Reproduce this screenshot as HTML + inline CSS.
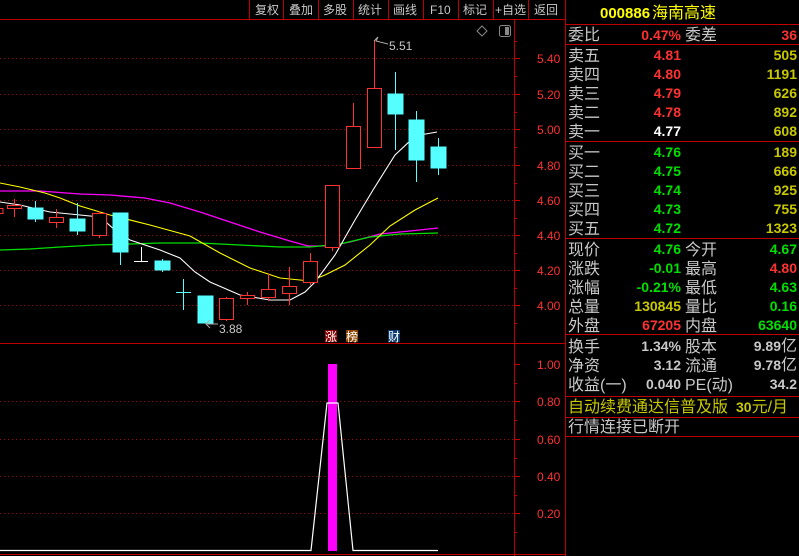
<!DOCTYPE html>
<html><head><meta charset="utf-8"><style>
html,body{margin:0;padding:0;background:#000;width:799px;height:556px;overflow:hidden}
svg{display:block}
text{font-family:"Liberation Sans","Noto Sans CJK SC",sans-serif}
.cn{font-size:16px;fill:#c8c8c8}
.n{font-size:14px;font-weight:bold}
.ax{font-size:12px;fill:#ff3232}
.bt{font-size:12px;fill:#c8c8c8}
</style></head><body>
<svg width="799" height="556" viewBox="0 0 799 556" xmlns="http://www.w3.org/2000/svg">
<rect width="799" height="556" fill="#000"/>
<!-- top bar -->
<line x1="0" y1="19.5" x2="565" y2="19.5" stroke="#c00000"/>
<g stroke="#c00000"><line x1="249.5" y1="0" x2="249.5" y2="19"/><line x1="283.5" y1="0" x2="283.5" y2="19"/><line x1="318.5" y1="0" x2="318.5" y2="19"/><line x1="353.5" y1="0" x2="353.5" y2="19"/><line x1="388.5" y1="0" x2="388.5" y2="19"/><line x1="423.5" y1="0" x2="423.5" y2="19"/><line x1="458.5" y1="0" x2="458.5" y2="19"/><line x1="493.5" y1="0" x2="493.5" y2="19"/><line x1="528.5" y1="0" x2="528.5" y2="19"/></g>
<g class="bt"><text x="255" y="14">复权</text><text x="289" y="14">叠加</text><text x="323" y="14">多股</text><text x="358" y="14">统计</text><text x="393" y="14">画线</text><text x="430" y="14">F10</text><text x="463" y="14">标记</text><text x="495" y="14">+自选</text><text x="534" y="14">返回</text></g>
<!-- icons -->
<path d="M482 26 L487 31 L482 36 L477 31 Z" fill="none" stroke="#888"/>
<rect x="499.5" y="25.5" width="11" height="11" rx="2" fill="none" stroke="#888"/><rect x="505" y="27" width="4" height="8" fill="#888"/>
<!-- axis borders -->
<line x1="514.5" y1="19" x2="514.5" y2="556" stroke="#c00000"/>
<line x1="565.5" y1="0" x2="565.5" y2="556" stroke="#c00000"/>
<line x1="0" y1="343.5" x2="565" y2="343.5" stroke="#c00000"/>
<line x1="0" y1="554.5" x2="565" y2="554.5" stroke="#c00000"/>
<!-- price grid -->
<g stroke="#b00000" stroke-dasharray="1,3">
<line x1="0" y1="58.5" x2="514" y2="58.5"/><line x1="0" y1="94.5" x2="514" y2="94.5"/><line x1="0" y1="129.5" x2="514" y2="129.5"/><line x1="0" y1="165.5" x2="514" y2="165.5"/><line x1="0" y1="200.5" x2="514" y2="200.5"/><line x1="0" y1="235.5" x2="514" y2="235.5"/><line x1="0" y1="270.5" x2="514" y2="270.5"/><line x1="0" y1="305.5" x2="514" y2="305.5"/>
<line x1="0" y1="401.5" x2="514" y2="401.5"/><line x1="0" y1="439.5" x2="514" y2="439.5"/><line x1="0" y1="476.5" x2="514" y2="476.5"/><line x1="0" y1="513.5" x2="514" y2="513.5"/>
</g>
<g stroke="#c00000">
<line x1="514" y1="58.5" x2="520" y2="58.5"/><line x1="514" y1="94.5" x2="520" y2="94.5"/><line x1="514" y1="129.5" x2="520" y2="129.5"/><line x1="514" y1="165.5" x2="520" y2="165.5"/><line x1="514" y1="200.5" x2="520" y2="200.5"/><line x1="514" y1="235.5" x2="520" y2="235.5"/><line x1="514" y1="270.5" x2="520" y2="270.5"/><line x1="514" y1="305.5" x2="520" y2="305.5"/>
<line x1="514" y1="76.5" x2="517" y2="76.5"/><line x1="514" y1="112.5" x2="517" y2="112.5"/><line x1="514" y1="147.5" x2="517" y2="147.5"/><line x1="514" y1="183.5" x2="517" y2="183.5"/><line x1="514" y1="218.5" x2="517" y2="218.5"/><line x1="514" y1="253.5" x2="517" y2="253.5"/><line x1="514" y1="288.5" x2="517" y2="288.5"/><line x1="514" y1="323.5" x2="517" y2="323.5"/><line x1="514" y1="41.5" x2="517" y2="41.5"/>
<line x1="514" y1="364.5" x2="520" y2="364.5"/><line x1="514" y1="401.5" x2="520" y2="401.5"/><line x1="514" y1="439.5" x2="520" y2="439.5"/><line x1="514" y1="476.5" x2="520" y2="476.5"/><line x1="514" y1="513.5" x2="520" y2="513.5"/>
<line x1="514" y1="383.5" x2="517" y2="383.5"/><line x1="514" y1="420.5" x2="517" y2="420.5"/><line x1="514" y1="458.5" x2="517" y2="458.5"/><line x1="514" y1="495.5" x2="517" y2="495.5"/><line x1="514" y1="532.5" x2="517" y2="532.5"/>
</g>
<g class="ax"><text x="537" y="63">5.40</text><text x="537" y="99">5.20</text><text x="537" y="134">5.00</text><text x="537" y="170">4.80</text><text x="537" y="205">4.60</text><text x="537" y="240">4.40</text><text x="537" y="275">4.20</text><text x="537" y="310">4.00</text>
<text x="537" y="369">1.00</text><text x="537" y="406">0.80</text><text x="537" y="444">0.60</text><text x="537" y="481">0.40</text><text x="537" y="518">0.20</text></g>
<!-- MA lines -->
<polyline fill="none" stroke="#ff00ff" stroke-width="1.3" points="0,191 40,191 80,194 110,195 145,198 170,203 200,212 230,222 260,232 290,241 308,246 330,246 350,242 380,234 410,231 438,228"/>
<polyline fill="none" stroke="#00e000" stroke-width="1.3" points="0,250 30,249 60,247 95,245 130,244 160,243 200,243 240,245 280,247 310,247 340,244 370,237 400,234 438,233"/>
<polyline fill="none" stroke="#ffff00" stroke-width="1.1" points="0,183 20,187 45,193 60,198 80,206 110,215 150,225 190,236 220,253 250,268 280,278 310,281 325,275 345,265 370,245 390,226 415,210 438,198"/>
<polyline fill="none" stroke="#fff" stroke-width="1.1" points="0,202 20,205 50,212 100,217 115,230 130,240 160,250 180,258 195,272 210,282 240,295 270,300 290,300 305,292 315,282 335,255 355,220 373,190 395,155 410,141 420,135 437,132"/>
<!-- candles -->
<g stroke="#ff3232" fill="#000">
<rect x="-3" y="208.5" width="6" height="5"/>
<line x1="14.5" y1="199" x2="14.5" y2="217"/><rect x="7.5" y="205.5" width="14" height="3"/>
<line x1="56.5" y1="209" x2="56.5" y2="228"/><rect x="49.5" y="217.5" width="14" height="5"/>
<line x1="99.5" y1="211" x2="99.5" y2="238"/><rect x="92.5" y="213.5" width="14" height="22"/>
<line x1="226.5" y1="297" x2="226.5" y2="321"/><rect x="219.5" y="298.5" width="14" height="21"/>
<line x1="247.5" y1="292" x2="247.5" y2="305"/><rect x="240.5" y="295.5" width="14" height="3"/>
<line x1="268.5" y1="273" x2="268.5" y2="301"/><rect x="261.5" y="289.5" width="14" height="8"/>
<line x1="289.5" y1="267" x2="289.5" y2="305"/><rect x="282.5" y="286.5" width="14" height="7"/>
<line x1="310.5" y1="253" x2="310.5" y2="285"/><rect x="303.5" y="261.5" width="14" height="21"/>
<line x1="332.5" y1="247" x2="332.5" y2="251"/><rect x="325.5" y="185.5" width="14" height="62"/>
<line x1="353.5" y1="103" x2="353.5" y2="126"/><rect x="346.5" y="126.5" width="14" height="42"/>
<line x1="374.5" y1="40" x2="374.5" y2="88"/><rect x="367.5" y="88.5" width="14" height="59"/>
</g>
<g stroke="#55ffff" fill="#55ffff">
<line x1="35.5" y1="201" x2="35.5" y2="222"/><rect x="28" y="208" width="15" height="11"/>
<line x1="77.5" y1="203" x2="77.5" y2="235"/><rect x="70" y="219" width="15" height="12"/>
<line x1="120.5" y1="252" x2="120.5" y2="265"/><rect x="113" y="213" width="15" height="39"/>
<line x1="162.5" y1="259" x2="162.5" y2="272"/><rect x="155" y="261" width="15" height="9"/>
<line x1="183.5" y1="279" x2="183.5" y2="310"/><line x1="176" y1="292.5" x2="191" y2="292.5"/>
<rect x="198" y="296" width="15" height="27"/>
<line x1="395.5" y1="72" x2="395.5" y2="150"/><rect x="388" y="94" width="15" height="20"/>
<line x1="416.5" y1="111" x2="416.5" y2="182"/><rect x="409" y="120" width="15" height="40"/>
<line x1="438.5" y1="138" x2="438.5" y2="175"/><rect x="431" y="147" width="15" height="21"/>
</g>
<line x1="141.5" y1="247" x2="141.5" y2="262" stroke="#fff"/><line x1="134" y1="261.5" x2="148" y2="261.5" stroke="#fff"/>
<!-- labels -->
<path d="M374 41 L378 37 L376 41 L388 44" fill="none" stroke="#aaa"/>
<text x="389" y="50" font-size="12" fill="#c8c8c8">5.51</text>
<path d="M210 320 L206 324 L210 328 M206 324 L218 324" fill="none" stroke="#aaa"/>
<text x="219" y="333" font-size="12" fill="#c8c8c8">3.88</text>
<rect x="325" y="330" width="12" height="12" fill="#8b0000"/><text x="325" y="341" font-size="12" fill="#fff">涨</text>
<rect x="346" y="330" width="12" height="12" fill="#8b4500"/><text x="346" y="341" font-size="12" fill="#fff">榜</text>
<rect x="388" y="330" width="12" height="12" fill="#0a3a70"/><text x="388" y="341" font-size="12" fill="#fff">财</text>
<!-- lower indicator -->
<rect x="328" y="364" width="9" height="187" fill="#ff00ff"/>
<polyline fill="none" stroke="#fff" stroke-width="1.2" points="0,550.5 311,550.5 327,403 338,403 353,550.5 438,550.5"/>
<!-- right panel -->
<g stroke="#c00000">
<line x1="565" y1="24.5" x2="799" y2="24.5"/><line x1="565" y1="44.5" x2="799" y2="44.5"/><line x1="565" y1="141.5" x2="799" y2="141.5"/><line x1="565" y1="238.5" x2="799" y2="238.5"/><line x1="565" y1="334.5" x2="799" y2="334.5"/><line x1="565" y1="396.5" x2="799" y2="396.5"/><line x1="565" y1="417.5" x2="799" y2="417.5"/><line x1="565" y1="436.5" x2="799" y2="436.5"/>
</g>
<text x="600" y="18" font-size="15" font-weight="bold" fill="#ffff00">000886</text><text x="652" y="18" font-size="16" fill="#ffff00">海南高速</text>
<text x="568" y="40" class="cn">委比</text><text x="681" y="40" text-anchor="end" class="n" fill="#ff3232">0.47%</text><text x="685" y="40" class="cn">委差</text><text x="797" y="40" text-anchor="end" class="n" fill="#ff3232">36</text>
<g class="cn"><text x="568" y="61">卖五</text><text x="568" y="80">卖四</text><text x="568" y="99">卖三</text><text x="568" y="118">卖二</text><text x="568" y="137">卖一</text>
<text x="568" y="158">买一</text><text x="568" y="177">买二</text><text x="568" y="196">买三</text><text x="568" y="215">买四</text><text x="568" y="234">买五</text></g>
<g class="n" text-anchor="end">
<text x="681" y="60" fill="#ff3232">4.81</text><text x="681" y="79" fill="#ff3232">4.80</text><text x="681" y="98" fill="#ff3232">4.79</text><text x="681" y="117" fill="#ff3232">4.78</text><text x="681" y="136" fill="#fff">4.77</text>
<text x="681" y="157" fill="#00e000">4.76</text><text x="681" y="176" fill="#00e000">4.75</text><text x="681" y="195" fill="#00e000">4.74</text><text x="681" y="214" fill="#00e000">4.73</text><text x="681" y="233" fill="#00e000">4.72</text>
<g fill="#c8c800"><text x="797" y="60">505</text><text x="797" y="79">1191</text><text x="797" y="98">626</text><text x="797" y="117">892</text><text x="797" y="136">608</text>
<text x="797" y="157">189</text><text x="797" y="176">666</text><text x="797" y="195">925</text><text x="797" y="214">755</text><text x="797" y="233">1323</text></g>
</g>
<g class="cn"><text x="568" y="255">现价</text><text x="568" y="274">涨跌</text><text x="568" y="293">涨幅</text><text x="568" y="312">总量</text><text x="568" y="331">外盘</text>
<text x="685" y="255">今开</text><text x="685" y="274">最高</text><text x="685" y="293">最低</text><text x="685" y="312">量比</text><text x="685" y="331">内盘</text>
<text x="568" y="352">换手</text><text x="568" y="371">净资</text><text x="568" y="390">收益(一)</text><text x="685" y="352">股本</text><text x="685" y="371">流通</text><text x="685" y="390">PE(动)</text>
<text x="568" y="432">行情连接已断开</text></g>
<g class="n" text-anchor="end">
<text x="681" y="254" fill="#00e000">4.76</text><text x="681" y="273" fill="#00e000">-0.01</text><text x="681" y="292" fill="#00e000">-0.21%</text><text x="681" y="311" fill="#c8c800">130845</text><text x="681" y="330" fill="#ff3232">67205</text>
<text x="797" y="254" fill="#00e000">4.67</text><text x="797" y="273" fill="#ff3232">4.80</text><text x="797" y="292" fill="#00e000">4.63</text><text x="797" y="311" fill="#00e000">0.16</text><text x="797" y="330" fill="#00e000">63640</text>
<text x="681" y="351" fill="#c8c8c8">1.34%</text><text x="681" y="370" fill="#c8c8c8">3.12</text><text x="681" y="389" fill="#c8c8c8">0.040</text>
<text x="797" y="389" fill="#c8c8c8">34.2</text></g>
<text x="797" y="351" text-anchor="end" fill="#c8c8c8"><tspan class="n">9.89</tspan><tspan font-size="16">亿</tspan></text>
<text x="797" y="370" text-anchor="end" fill="#c8c8c8"><tspan class="n">9.78</tspan><tspan font-size="16">亿</tspan></text>
<text x="568" y="412" font-size="16" fill="#c8c800">自动续费通达信普及版</text><text x="736" y="412" fill="#c8c800"><tspan class="n">30</tspan><tspan font-size="16">元/月</tspan></text>
</svg>
</body></html>
